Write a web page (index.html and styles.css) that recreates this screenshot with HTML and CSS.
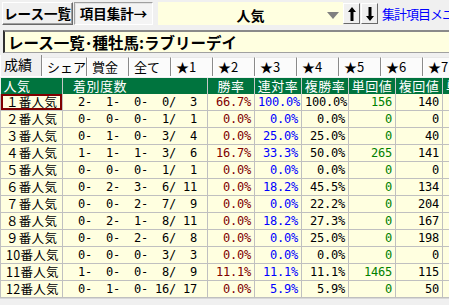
FILE: index.html
```html
<!DOCTYPE html>
<html lang="ja">
<head>
    <meta charset="UTF-8">
    <title>集計</title>
    <link rel="stylesheet" href="styles.css">
</head>
<body>
    <div class="toolbar">
        <button class="btn">レース一覧</button>
        <button class="btn btn-on">項目集計→</button>
        <div class="combo">
            <span class="combo-text">人気</span>
            <span class="combo-arrow"></span>
        </div>
        <button class="arrow-btn">
            <svg width="10" height="16" viewBox="0 0 10 16"><path d="M5 1 L9 6 H6.5 V15 H3.5 V6 H1 Z" fill="#000"/></svg>
        </button>
        <button class="arrow-btn">
            <svg width="10" height="16" viewBox="0 0 10 16"><path d="M5 15 L9 10 H6.5 V1 H3.5 V10 H1 Z" fill="#000"/></svg>
        </button>
        <a class="menu-link" href="#">集計項目メニュー</a>
    </div>

    <div class="title">レース一覧･種牡馬:ラブリーデイ</div>

    <div class="tabs">
        <span class="tab active">成績</span>
        <span class="tab">シェア</span>
        <span class="tab">賞金</span>
        <span class="tab">全て</span>
        <span class="tab">★1</span>
        <span class="tab">★2</span>
        <span class="tab">★3</span>
        <span class="tab">★4</span>
        <span class="tab">★5</span>
        <span class="tab">★6</span>
        <span class="tab">★7</span>
    </div>

    <div class="grid">
        <table>
            <colgroup>
                <col class="c-rank">
                <col class="c-count">
                <col class="c-num">
                <col class="c-num">
                <col class="c-num">
                <col class="c-num">
                <col class="c-num">
                <col class="c-num">
            </colgroup>
            <thead>
                <tr>
                    <th class="left">人気</th>
                    <th class="left pad">着別度数</th>
                    <th>勝率</th>
                    <th>連対率</th>
                    <th>複勝率</th>
                    <th>単回値</th>
                    <th>複回値</th>
                    <th class="left">単</th>
                </tr>
            </thead>
            <tbody id="rows"></tbody>
        </table>
    </div>
    <div class="hscroll"></div>

    <script>
        // rank, 1st, 2nd, 3rd, runs, win%, top2%, top3%, win return, place return
        var data = [
            ['１', 2, 1, 0, 3, '66.7', '100.0', '100.0', 156, 140],
            ['２', 0, 0, 0, 1, '0.0', '0.0', '0.0', 0, 0],
            ['３', 0, 1, 0, 4, '0.0', '25.0', '25.0', 0, 40],
            ['４', 1, 1, 1, 6, '16.7', '33.3', '50.0', 265, 141],
            ['５', 0, 0, 0, 1, '0.0', '0.0', '0.0', 0, 0],
            ['６', 0, 2, 3, 11, '0.0', '18.2', '45.5', 0, 134],
            ['７', 0, 0, 2, 9, '0.0', '0.0', '22.2', 0, 204],
            ['８', 0, 2, 1, 11, '0.0', '18.2', '27.3', 0, 167],
            ['９', 0, 0, 2, 8, '0.0', '0.0', '25.0', 0, 198],
            ['10', 0, 0, 0, 3, '0.0', '0.0', '0.0', 0, 0],
            ['11', 1, 0, 0, 9, '11.1', '11.1', '11.1', 1465, 115],
            ['12', 0, 1, 0, 17, '0.0', '5.9', '5.9', 0, 50]
        ];

        function pad2(n) {
            return (n < 10 ? ' ' : '') + n;
        }

        var tbody = document.getElementById('rows');
        data.forEach(function (r, i) {
            var placed = r[1] + r[2] + r[3];
            var rest = r[4] - placed;
            var counts = pad2(r[1]) + '- ' + pad2(r[2]) + '- ' + pad2(r[3]) + '- ' + pad2(rest) + '/ ' + pad2(r[4]);
            var tr = document.createElement('tr');
            tr.innerHTML =
                '<td class="rank' + (i === 0 ? ' sel' : '') + '">' + r[0] + '番人気</td>' +
                '<td class="mono counts">' + counts + '</td>' +
                '<td class="mono red">' + r[5] + '%</td>' +
                '<td class="mono blue">' + r[6] + '%</td>' +
                '<td class="mono">' + r[7] + '%</td>' +
                '<td class="mono green">' + r[8] + '</td>' +
                '<td class="mono">' + r[9] + '</td>' +
                '<td></td>';
            tbody.appendChild(tr);
        });
    </script>
</body>
</html>
```

FILE: styles.css
```css
body {
    margin: 0;
    background-color: #f0f0f0;
    font-family: "Noto Sans CJK JP", sans-serif;
    width: 449px;
    height: 305px;
    overflow: hidden;
}

/* top toolbar */

.toolbar {
    display: flex;
    align-items: flex-start;
    padding: 2px 0 0 2px;
    height: 26px;
    white-space: nowrap;
    overflow: hidden;
}

.toolbar > * {
    flex-shrink: 0;
}

.btn {
    height: 23px;
    padding: 0;
    font-family: "Noto Sans CJK JP", sans-serif;
    font-weight: bold;
    font-size: 13.5px;
    line-height: 19px;
    color: #000;
    background-color: #f0f0f0;
    border: 1px solid;
    border-color: #fff #696969 #696969 #fff;
    box-shadow: inset -1px -1px 0 #a0a0a0;
    width: 71px;
}

.btn-on {
    width: 79px;
    margin-left: 1px;
    border-color: #a0a0a0 #fff #fff #a0a0a0;
    box-shadow: inset 1px 1px 0 #e3e3e3;
    background-color: #f4f4f4;
}

.combo {
    position: relative;
    width: 185px;
    height: 23px;
    margin-left: 5px;
    background-color: #ffffe0;
    text-align: center;
}

.combo-text {
    font-weight: bold;
    font-size: 14px;
    line-height: 23px;
}

.combo-arrow {
    position: absolute;
    right: 4px;
    top: 10px;
    border-left: 6px solid transparent;
    border-right: 6px solid transparent;
    border-top: 7px solid #808080;
}

.arrow-btn {
    width: 17px;
    height: 21px;
    margin-top: 1px;
    padding: 0;
    background-color: #f0f0f0;
    border: 1px solid;
    border-color: #fff #696969 #696969 #fff;
    display: flex;
    align-items: center;
    justify-content: center;
}

.arrow-btn:first-of-type {
    margin-left: 5px;
}

.arrow-btn + .arrow-btn {
    margin-left: 1px;
}

.menu-link {
    margin-left: 4px;
    color: #0000ff;
    text-decoration: none;
    font-size: 13px;
    letter-spacing: -1px;
    line-height: 23px;
}

/* title box */

.title {
    margin: 2px 0 0 3px;
    height: 20px;
    padding-left: 3px;
    background-color: #ffffe0;
    border-top: 2px solid #8a8a8a;
    border-left: 2px solid #303030;
    border-bottom: 1px solid #a0a0a0;
    font-weight: bold;
    font-size: 15.5px;
    line-height: 20px;
    white-space: nowrap;
}

/* tabs */

.tabs {
    display: flex;
    margin-top: 2px;
    height: 21px;
    white-space: nowrap;
    border-bottom: 1px solid #fff;
}

.tab {
    flex: 0 0 42px;
    box-sizing: border-box;
    height: 19px;
    margin-top: 2px;
    padding-left: 4px;
    font-size: 13px;
    line-height: 17px;
    background-color: #fbfbfb;
    border-left: 1px solid #fff;
    border-right: 1px solid #8a8a8a;
    border-top: 1px solid #e8e8e8;
}

.tab.active {
    height: 21px;
    margin-top: 0;
    padding-left: 3px;
    font-size: 14px;
    line-height: 19px;
    background-color: #f0f0f0;
    border-top: none;
}

/* data grid */

.grid {
    margin-top: 1px;
    width: 449px;
    overflow: hidden;
}

table {
    table-layout: fixed;
    border-collapse: collapse;
    width: 490px;
}

.c-rank { width: 62px; }
.c-count { width: 145px; }
.c-num { width: 47px; }

th {
    height: 16px;
    padding: 0 2px;
    background-color: #00743e;
    color: #fff;
    font-weight: normal;
    font-size: 13px;
    line-height: 16px;
    border-right: 1px solid #c8c8c8;
    text-align: center;
    white-space: nowrap;
    letter-spacing: 0.5px;
}

th.left {
    text-align: left;
    padding-left: 3px;
}

th.pad {
    padding-left: 10px;
}

td {
    height: 16px;
    padding: 0 3px;
    background-color: #ffffe0;
    border: 1px solid #c0c0c0;
    border-top: none;
    font-size: 13px;
    line-height: 16px;
    text-align: right;
    white-space: pre;
}

td.rank {
    text-align: left;
    padding-left: 5px;
    font-size: 12.5px;
    letter-spacing: 0.3px;
}

td.sel {
    box-shadow: inset 0 0 0 2px #800000;
}

.mono {
    font-family: "DejaVu Sans Mono", monospace;
    font-size: 12px;
    letter-spacing: -0.22px;
}

td.counts {
    padding-right: 10px;
}

.red { color: #800000; }
.blue { color: #0000ff; }
.green { color: #008000; }

.hscroll {
    height: 6px;
    border-top: 1px solid #d8d8d8;
    background-color: #f0f0f0;
}
```
